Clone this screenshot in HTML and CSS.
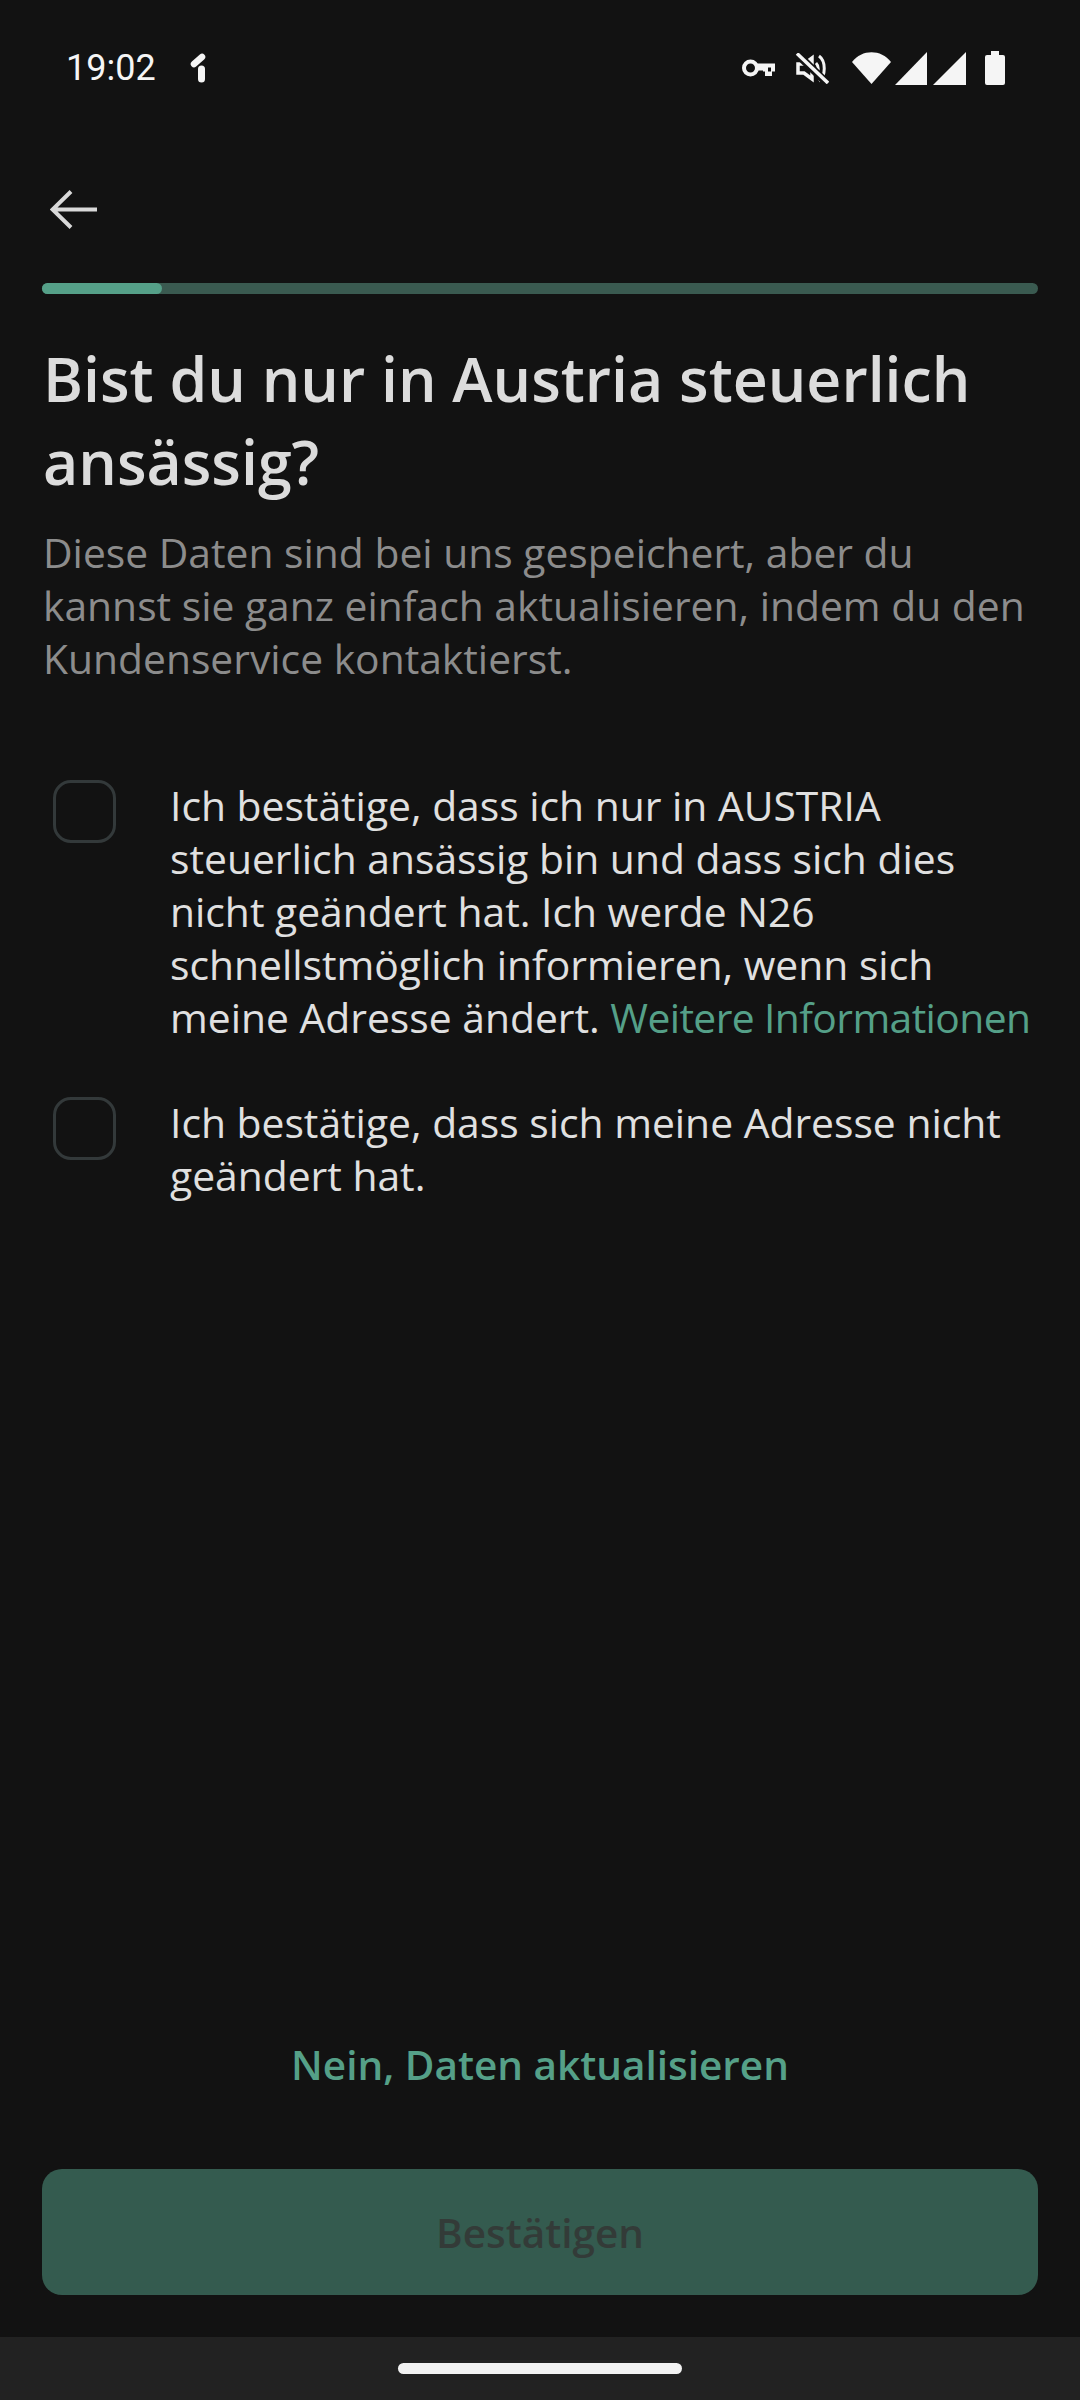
FILE: index.html
```html
<!DOCTYPE html>
<html lang="de">
<head>
  <meta charset="UTF-8">
  <meta name="viewport" content="width=device-width, initial-scale=1.0">
  <title>Steuerliche Ansässigkeit</title>
  <link rel="stylesheet" href="styles.css">
</head>
<body>
  <div class="screen">
    <div class="status-bar">
      <div class="status-left">
        <span class="clock">19:02</span>
        <svg class="n26-icon" width="16" height="30" viewBox="0 0 16 30"><path d="M4 11 L12 4" stroke="#f5f5f5" stroke-width="6.500" stroke-linecap="round" fill="none"/><path d="M11.500 16 V26" stroke="#f5f5f5" stroke-width="7" stroke-linecap="round" fill="none"/></svg>
      </div>
      <div class="status-right">
        <svg class="icon-key" width="33" height="18" viewBox="0 0 33 18"><circle cx="8.500" cy="9" r="6.500" fill="none" stroke="#f5f5f5" stroke-width="4"/><path d="M15 4.500h18v8h-3v4.500h-7v-4.500h-2v-1h-6z" fill="#f5f5f5"/><path d="M26 8.500h3v4h-3z" fill="#121212"/></svg>
        <svg class="icon-mute" width="34" height="31" viewBox="0 0 34 31"><path d="M3 11h6l8-6v21l-8-6H3z" fill="none" stroke="#f5f5f5" stroke-width="3.500"/><path d="M21 10c3 3 3 9 0 12M24 3c7 5 7 20 0 25" fill="none" stroke="#f5f5f5" stroke-width="3"/><path d="M1 0 L33 31" stroke="#121212" stroke-width="8"/><path d="M2 0.500 L33 30" stroke="#f5f5f5" stroke-width="3.500"/></svg>
        <svg class="icon-wifi" width="39" height="32" viewBox="0 0 39 32"><path d="M0 10 C10 -3 29 -3 39 10 L19.500 32z" fill="#f5f5f5"/></svg>
        <svg class="icon-signal" width="32" height="33" viewBox="0 0 32 33"><path d="M32 0v33H0z" fill="#f5f5f5"/></svg>
        <svg class="icon-signal second" width="33" height="33" viewBox="0 0 33 33"><path d="M33 0v33H0z" fill="#f5f5f5"/></svg>
        <svg class="icon-battery" width="20" height="34" viewBox="0 0 20 34"><path d="M6 0h8v4h4a2 2 0 0 1 2 2v26a2 2 0 0 1-2 2H2a2 2 0 0 1-2-2V6a2 2 0 0 1 2-2h4z" fill="#f5f5f5"/></svg>
      </div>
    </div>

    <div class="toolbar">
      <svg class="back" width="47" height="39" viewBox="0 0 47 39"><path d="M47 19.500H3M21 1.500 2.500 19.500 21 37.500" fill="none" stroke="#d9d9d9" stroke-width="4"/></svg>
    </div>

    <div class="progress"><div class="progress-fill"></div></div>

    <main class="content">
      <h1 class="title">Bist du nur in Austria steuerlich ansässig?</h1>
      <p class="subtitle">Diese Daten sind bei uns gespeichert, aber du kannst sie ganz einfach aktualisieren, indem du den Kundenservice kontaktierst.</p>

      <div class="checks">
        <div class="check-row">
          <span class="checkbox"></span>
          <p class="check-text">Ich bestätige, dass ich nur in AUSTRIA steuerlich ansässig bin und dass sich dies nicht geändert hat. Ich werde N26 schnellstmöglich informieren, wenn sich meine Adresse ändert. <a class="link">Weitere Informationen</a></p>
        </div>
        <div class="check-row">
          <span class="checkbox"></span>
          <p class="check-text">Ich bestätige, dass sich meine Adresse nicht geändert hat.</p>
        </div>
      </div>
    </main>

    <div class="actions">
      <div class="secondary">Nein, Daten aktualisieren</div>
      <button class="confirm">Bestätigen</button>
    </div>

    <div class="nav-bar"><div class="home-handle"></div></div>
  </div>
</body>
</html>
```

FILE: styles.css
```css
* {
  margin: 0;
  padding: 0;
  box-sizing: border-box;
}

body {
  font-family: "Open Sans", Arial, sans-serif;
  background-color: #121212;
}

.screen {
  width: 1080px;
  height: 2400px;
  display: flex;
  flex-direction: column;
  background: #121212;
}

/* Status bar */
.status-bar {
  height: 136px;
  padding: 0 75px 0 66px;
  display: flex;
  justify-content: space-between;
  align-items: center;
  flex-shrink: 0;
}

.status-left {
  display: flex;
  align-items: center;
  gap: 34px;
}

.clock {
  font-family: Roboto, sans-serif;
  font-size: 36px;
  color: #f5f5f5;
}

.status-right {
  display: flex;
  align-items: center;
}

.icon-mute {
  margin-left: 20px;
}

.icon-wifi {
  margin-left: 23px;
}

.icon-signal {
  margin-left: 4px;
}

.icon-signal.second {
  margin-left: 6px;
}

.icon-battery {
  margin-left: 19px;
}

/* Back arrow and progress */
.toolbar {
  height: 147px;
  padding: 54px 0 0 50px;
  flex-shrink: 0;
}

.back {
  display: block;
}

.progress {
  height: 11px;
  margin: 0 42px;
  border-radius: 6px;
  background: #3a5a50;
  flex-shrink: 0;
}

.progress-fill {
  width: 120px;
  height: 100%;
  border-radius: 6px;
  background: #55a088;
}

/* Main text */
.content {
  flex: 1;
  padding: 43px 42px 0 43px;
}

.title {
  font-size: 60.800px;
  line-height: 83px;
  font-weight: 600;
  color: #dcdcdc;
}

.subtitle {
  margin-top: 23px;
  font-size: 40.800px;
  line-height: 53px;
  color: #8c8c8c;
}

.checks {
  margin-top: 95px;
  display: flex;
  flex-direction: column;
  gap: 53px;
}

.check-row {
  display: flex;
  align-items: flex-start;
}

.checkbox {
  width: 63px;
  height: 63px;
  margin: 0 0 0 10px;
  border: 3px solid #33393a;
  border-radius: 18px;
  flex-shrink: 0;
}

.check-text {
  margin-left: 54px;
  margin-top: -1px;
  font-size: 40.800px;
  line-height: 53px;
  color: #e0e0e0;
}

.link {
  letter-spacing: -0.6px;
  color: #55a088;
}

/* Bottom actions */
.actions {
  padding: 0 42px;
  flex-shrink: 0;
}

.secondary {
  text-align: center;
  font-size: 40.500px;
  line-height: 50px;
  font-weight: 600;
  color: #55a088;
}

.confirm {
  display: block;
  width: 100%;
  height: 126px;
  margin-top: 79px;
  margin-bottom: 42px;
  border: none;
  border-radius: 20px;
  background: #345b4f;
  color: #333b38;
  font-family: inherit;
  font-size: 40.500px;
  font-weight: 600;
}

/* Android nav bar */
.nav-bar {
  height: 63px;
  display: flex;
  justify-content: center;
  padding-top: 26px;
  background: #222222;
  flex-shrink: 0;
}

.home-handle {
  width: 284px;
  height: 11px;
  border-radius: 6px;
  background: #f2f2f2;
}
```
